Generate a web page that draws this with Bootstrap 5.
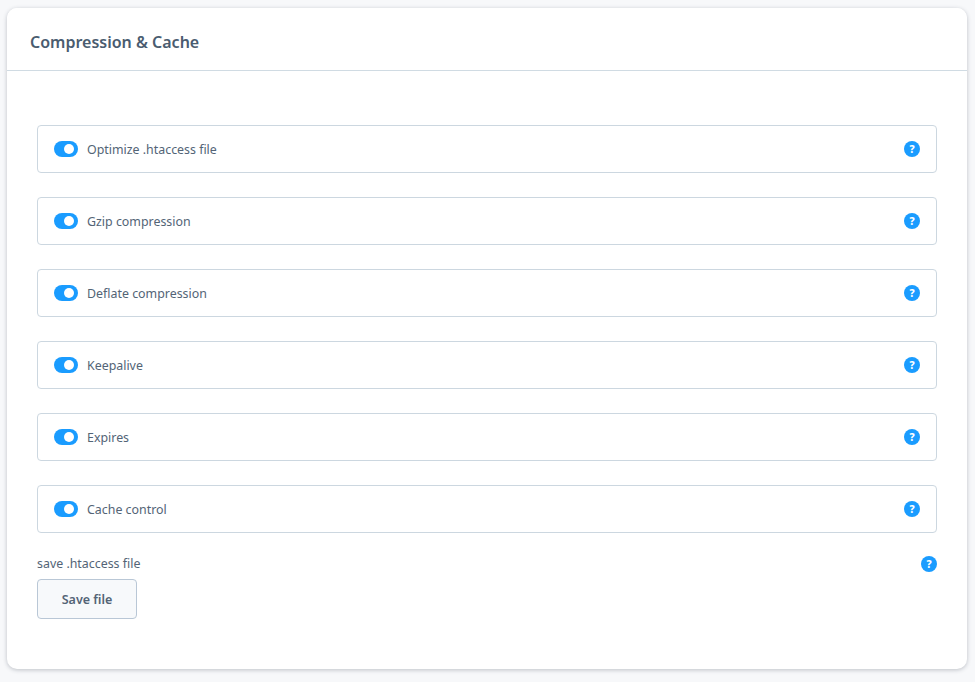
<!DOCTYPE html>
<html lang="en">
<head>
  <meta charset="UTF-8">
  <meta name="viewport" content="width=device-width, initial-scale=1.0">
  <title>Compression &amp; Cache</title>
  <link href="https://cdn.jsdelivr.net/npm/bootstrap@5.3.3/dist/css/bootstrap.min.css" rel="stylesheet">
  <style>
    body {
      font-family: "Noto Sans", sans-serif;
      background-color: #f7f8fa;
      color: #536476;
      font-size: 12.4px;
    }

    .page-wrap {
      padding: 8px 8px 13px 7px;
    }

    .panel {
      border: 0;
      border-radius: 10px;
      box-shadow: 0 1px 4px rgba(40, 50, 70, 0.28);
    }

    .panel .card-header {
      height: 63px;
      padding: 8px 23px 0;
      background: #fff;
      border-bottom: 1px solid #d0dbe3;
      border-radius: 10px 10px 0 0;
    }

    .panel-title {
      font-size: 16px;
      font-weight: 600;
      color: #4a5c70;
      margin: 0;
    }

    .panel .card-body {
      padding: 54px 30px 50px;
    }

    .opt-row {
      height: 48px;
      padding: 0 16px;
      margin-bottom: 24px;
      border: 1px solid #ccd7e0;
      border-radius: 4px;
    }

    .opt-switch {
      width: 24px;
      height: 16px;
      border-radius: 8px;
      background: #1a9cff;
      flex: none;
    }

    .opt-switch::after {
      content: "";
      width: 10px;
      height: 10px;
      border-radius: 50%;
      background: #fff;
      margin-left: 10px;
    }

    .opt-label {
      margin-left: 9px;
      padding-top: 3px;
    }

    .help-dot {
      width: 16px;
      height: 16px;
      border-radius: 50%;
      background: #1a9cff;
      color: #fff;
      font-size: 10.5px;
      font-weight: 800;
      line-height: 16px;
      text-align: center;
      flex: none;
    }

    .save-line {
      margin-top: -3px;
      height: 20px;
    }

    .btn-save {
      width: 100px;
      height: 40px;
      margin-top: 5px;
      padding: 2px 0 0;
      font-size: 12.5px;
      font-weight: 600;
      color: #536476;
      background: #f7f9fb;
      border: 1px solid #b9c7d6;
      border-radius: 4px;
    }
  </style>
</head>
<body>

<div class="page-wrap">
  <div class="card panel">
    <div class="card-header d-flex align-items-center">
      <h5 class="panel-title">Compression &amp; Cache</h5>
    </div>
    <div class="card-body">

      <div class="opt-row d-flex align-items-center">
        <span class="opt-switch d-flex align-items-center"></span>
        <span class="opt-label flex-grow-1">Optimize .htaccess file</span>
        <span class="help-dot">?</span>
      </div>

      <div class="opt-row d-flex align-items-center">
        <span class="opt-switch d-flex align-items-center"></span>
        <span class="opt-label flex-grow-1">Gzip compression</span>
        <span class="help-dot">?</span>
      </div>

      <div class="opt-row d-flex align-items-center">
        <span class="opt-switch d-flex align-items-center"></span>
        <span class="opt-label flex-grow-1">Deflate compression</span>
        <span class="help-dot">?</span>
      </div>

      <div class="opt-row d-flex align-items-center">
        <span class="opt-switch d-flex align-items-center"></span>
        <span class="opt-label flex-grow-1">Keepalive</span>
        <span class="help-dot">?</span>
      </div>

      <div class="opt-row d-flex align-items-center">
        <span class="opt-switch d-flex align-items-center"></span>
        <span class="opt-label flex-grow-1">Expires</span>
        <span class="help-dot">?</span>
      </div>

      <div class="opt-row d-flex align-items-center">
        <span class="opt-switch d-flex align-items-center"></span>
        <span class="opt-label flex-grow-1">Cache control</span>
        <span class="help-dot">?</span>
      </div>

      <div class="save-line d-flex align-items-center justify-content-between">
        <span>save .htaccess file</span>
        <span class="help-dot">?</span>
      </div>
      <button type="button" class="btn btn-save">Save file</button>

    </div>
  </div>
</div>

<script src="https://cdn.jsdelivr.net/npm/bootstrap@5.3.3/dist/js/bootstrap.bundle.min.js"></script>
</body>
</html>
